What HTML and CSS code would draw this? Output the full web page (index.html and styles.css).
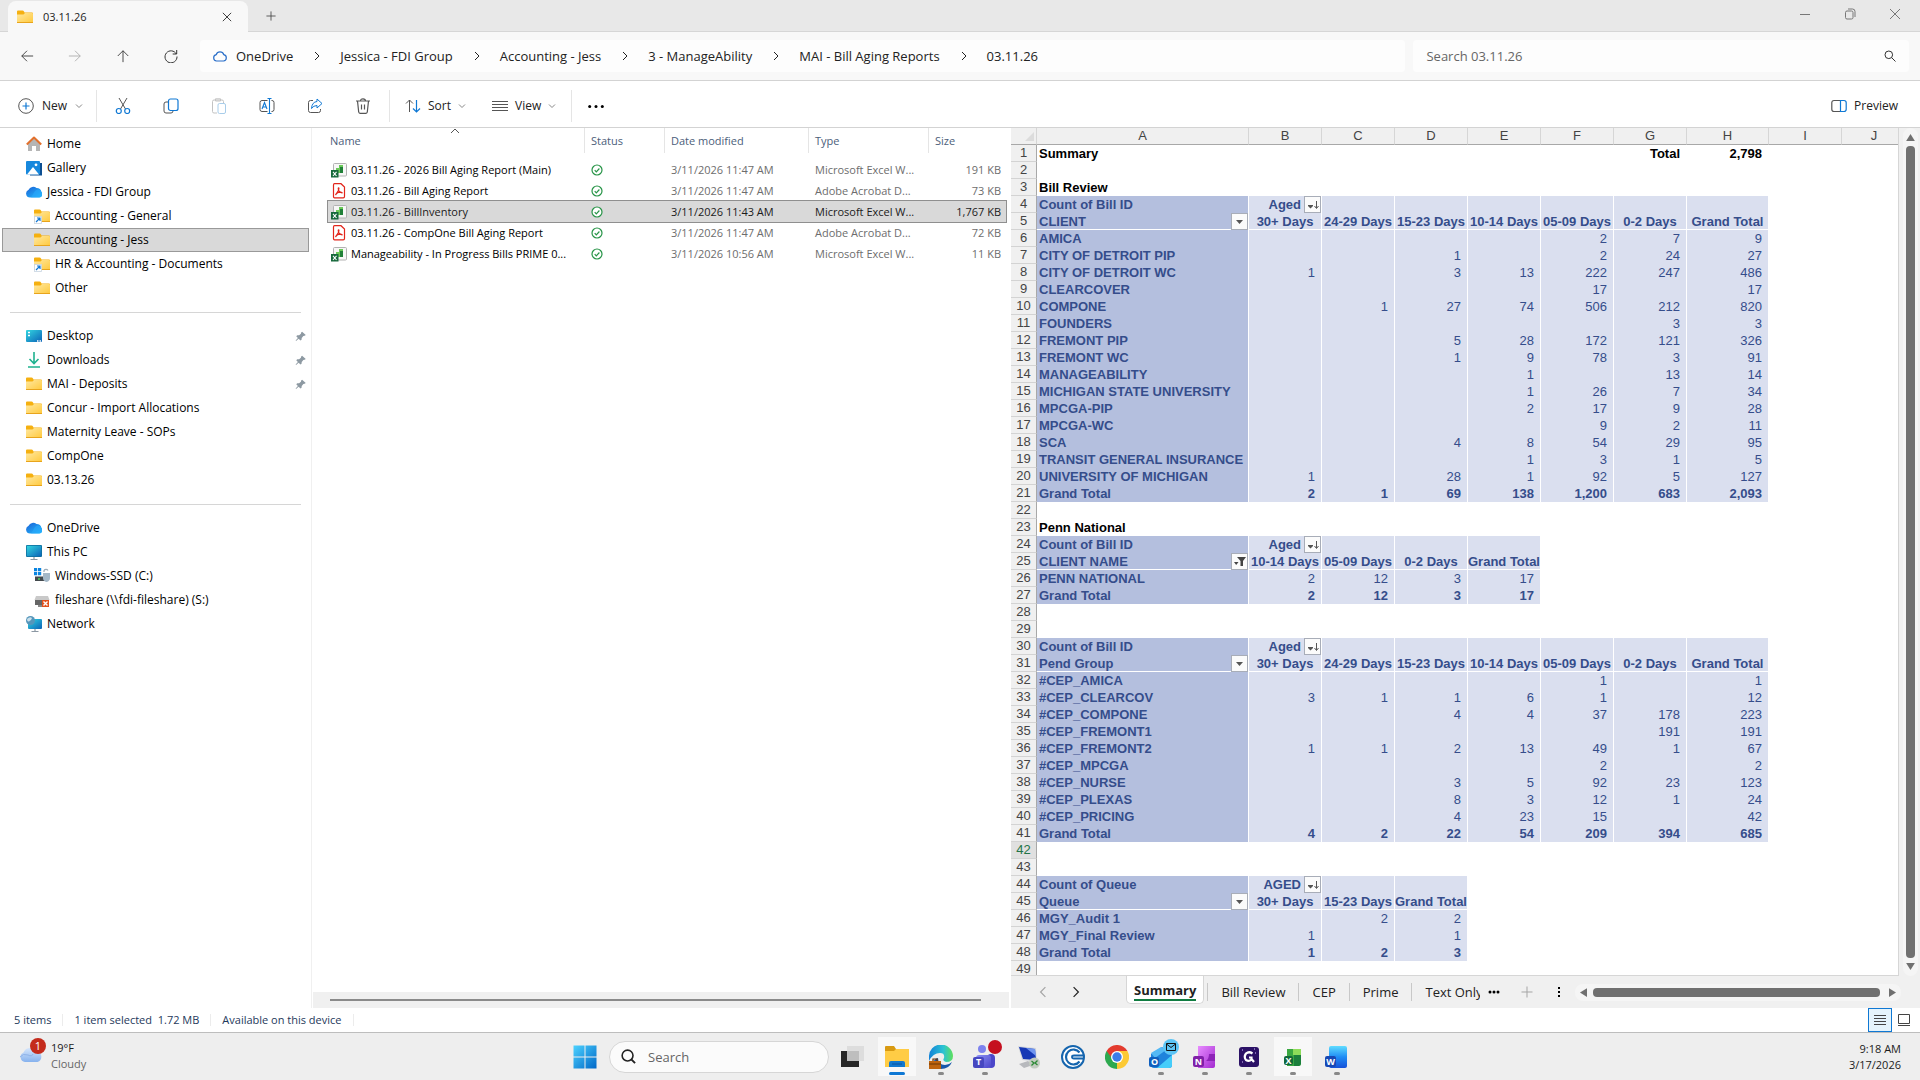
FILE: index.html
```html
<!DOCTYPE html>
<html lang="en">
<head>
<meta charset="utf-8">
<title>03.11.26 - File Explorer</title>
<link rel="stylesheet" href="styles.css">
</head>
<body>
<svg class="defs" aria-hidden="true">
  <defs>
    <linearGradient id="gFolder" x1="0" y1="0" x2="1" y2="1"><stop offset="0" stop-color="#ffe8a0"/><stop offset="1" stop-color="#ffc93c"/></linearGradient>
    <linearGradient id="gScreen" x1="0" y1="0" x2="1" y2="1"><stop offset="0" stop-color="#33d6e0"/><stop offset="1" stop-color="#0b63b8"/></linearGradient>
    <linearGradient id="gCloud" x1="0" y1="0" x2="1" y2="1"><stop offset="0" stop-color="#1b5fd6"/><stop offset="1" stop-color="#23c3ff"/></linearGradient>
    <linearGradient id="gWin" x1="0" y1="0" x2="1" y2="1"><stop offset="0" stop-color="#4cd2ff"/><stop offset="1" stop-color="#0067c7"/></linearGradient>
    <linearGradient id="gEdge" x1="0" y1="0" x2="1" y2="0"><stop offset="0" stop-color="#1382d8"/><stop offset=".6" stop-color="#2cc3d3"/><stop offset="1" stop-color="#5fe05a"/></linearGradient>
    <linearGradient id="gTeams" x1="0" y1="0" x2="1" y2="1"><stop offset="0" stop-color="#8b8ff5"/><stop offset="1" stop-color="#4b46c9"/></linearGradient>
    <linearGradient id="gNote" x1="0" y1="0" x2="1" y2="1"><stop offset="0" stop-color="#e78bff"/><stop offset="1" stop-color="#a32bd0"/></linearGradient>
    <linearGradient id="gWord" x1="0" y1="0" x2="0" y2="1"><stop offset="0" stop-color="#5fdcff"/><stop offset=".5" stop-color="#1f8cf5"/><stop offset="1" stop-color="#1650d8"/></linearGradient>
    <linearGradient id="gWeather" x1="0" y1="0" x2="0" y2="1"><stop offset="0" stop-color="#d6e6fb"/><stop offset="1" stop-color="#86b2ee"/></linearGradient>
  </defs>
  <symbol id="folder" viewBox="0 0 16 16"><path d="M0 2.500Q0 1.500 1 1.500H5.500Q6.500 1.500 7 2.500L7.500 3.500H15Q16 3.500 16 4.500V7H0Z" fill="#f5b010"/><path d="M0 5.500H6.500L8 4H15Q16 4 16 5V13Q16 14 15 14H1Q0 14 0 13Z" fill="url(#gFolder)"/><path d="M0 13.500H16" stroke="#e8a41c"/></symbol>
  <symbol id="folder-link" viewBox="0 0 16 16"><use href="#folder"/><rect x=".5" y="8.500" width="7" height="7" fill="#fff" stroke="#c8d4e0" stroke-width=".8"/><path d="M2 14L6 10M3 10H6V13" fill="none" stroke="#1177d4" stroke-width="1.200"/></symbol>
  <symbol id="home" viewBox="0 0 16 16"><path d="M2 7L8 2L14 7V15H10V10H6V15H2Z" fill="#b5b5b5"/><path d="M.8 8.500L8 1.500L15.200 8.500" fill="none" stroke="#e2702c" stroke-width="2" stroke-linejoin="round"/></symbol>
  <symbol id="gallery" viewBox="0 0 16 16"><path d="M4 3H16V15.500H4Z" fill="#0d4f92"/><rect width="14" height="13.500" rx="1" y="1" fill="#1788dd"/><path d="M1 14.500L7 7L13 14.500Z" fill="#fff"/><circle cx="10" cy="4.800" r="1.400" fill="#fff"/></symbol>
  <symbol id="cloud" viewBox="0 0 16 16"><path d="M4 13.500A4 4 0 0 1 2.600 5.800A5 5 0 0 1 10.500 4A5 5 0 0 1 15.500 8A3.200 3.200 0 0 1 13 13.500Z" fill="url(#gCloud)"/><path d="M5 13.500L9 7Q11 4.500 14 6L15.500 8A3.200 3.200 0 0 1 13 13.500Z" fill="#2aa9fb" opacity=".6"/></symbol>
  <symbol id="desktop" viewBox="0 0 16 16"><rect y="2" width="16" height="12" rx="1" fill="url(#gScreen)"/><path d="M2 4.500H4M2 7.500H4M11 13H12.500M13.500 13H15" stroke="#fff" stroke-width="1.500"/></symbol>
  <symbol id="download" viewBox="0 0 16 16"><path d="M8 0V11M3.500 7L8 11.500L12.500 7M2 15H14" fill="none" stroke="#1fb28f" stroke-width="1.600"/></symbol>
  <symbol id="pc" viewBox="0 0 16 16"><rect y="1" width="16" height="12" rx="1" fill="#0e6f9e"/><rect x=".8" y="1.800" width="14.400" height="10.400" fill="url(#gScreen)"/><path d="M8 13V15M4.500 15.500H11.500" stroke="#8c98a3" stroke-width="1.200"/></symbol>
  <symbol id="ssd" viewBox="0 0 16 16"><path d="M0 0H3.200V3.200H0ZM4 0H7.200V3.200H4ZM0 4H3.200V7.200H0ZM4 4H7.200V7.200H4Z" fill="#0a84e0"/><rect x="1" y="8.500" width="13" height="4.500" fill="#43494d"/><circle cx="5" cy="11" r="1" fill="#4fd35a"/><path d="M10 4V2.500A2.300 2.300 0 0 1 14 2.500" fill="none" stroke="#9aabb8" stroke-width="1.200"/><path d="M9 5H16V10Q16 13 12.500 14Q9 13 9 10Z" fill="#a4b8c8"/></symbol>
  <symbol id="share-drive" viewBox="0 0 16 16"><path d="M2 4H14L15.500 8H.5Z" fill="#c9c9c9"/><rect x="1" y="8" width="13" height="5" fill="#666"/><path d="M4 13H9V15H4Z" fill="#888"/><rect x="8" y="8" width="7" height="7" fill="#e2501c"/><path d="M9.500 9.500L13.500 13.500M13.500 9.500L9.500 13.500" stroke="#fff" stroke-width="1.400"/></symbol>
  <symbol id="network" viewBox="0 0 16 16"><rect x="2" y="3" width="14" height="10" rx="1" fill="url(#gScreen)"/><path d="M9 13V15M5.500 15.500H12.500" stroke="#8c98a3" stroke-width="1.200"/><circle cx="4.500" cy="4.500" r="4.500" fill="#5596bb"/><path d="M1 3Q4 0 6 2Q5 5 3 5.500Q1 6 1 3Z" fill="#c9dfeb"/></symbol>
  <symbol id="pin" viewBox="0 0 16 16"><path d="M10 2L14.500 6L13 7.200L11.500 7.500L9.500 9.800L9.300 12L8 13L5.700 10.800L2.500 13.500L2 13L4.800 9.800L2.800 7.700L4 6.500L6.300 6.500L8.500 4.500L8.800 3Z" fill="#8d99a2"/></symbol>
  <symbol id="xls" viewBox="0 0 16 16"><rect x="2.500" y="1.500" width="13" height="12.500" rx="1" fill="#f7f7f7" stroke="#b2b2b2"/><path d="M5 6H8V11H5ZM8 3H12V11H8Z" fill="#6cc95a"/><path d="M9 5H12V11H9Z" fill="#208038"/><rect y="8" width="7.500" height="7.500" fill="#17693c"/><path d="M2 9.800L5.500 14M5.500 9.800L2 14" stroke="#fff" stroke-width="1.100"/></symbol>
  <symbol id="pdf" viewBox="0 0 16 16"><path d="M3.500.7H10L13.500 4V13.500Q13.500 14.800 12.300 14.800H3.500Q2.500 14.800 2.500 13.500V2Q2.500.7 3.500.7Z" fill="#fff" stroke="#e2251b" stroke-width="1.200"/><path d="M5 11.500C5.500 9.500 8 8 8 5.500C8 4.500 7.200 4.500 7.200 5.500C7.200 8 9.500 10 11 10C12 9 8 8.500 5.500 10.500C4.500 11.300 4.500 12 5 11.500Z" fill="none" stroke="#e2251b" stroke-width="1.100"/></symbol>
  <symbol id="synced" viewBox="0 0 12 12"><circle cx="6" cy="6" r="5" fill="#fff" stroke="#279447" stroke-width="1.200"/><path d="M3.700 6.200L5.300 7.800L8.400 4.500" fill="none" stroke="#279447" stroke-width="1.200"/></symbol>
  <symbol id="chev-r" viewBox="0 0 10 10"><path d="M3 1L7 5L3 9" fill="none" stroke="currentColor"/></symbol>
  <symbol id="chev-d" viewBox="0 0 8 8"><path d="M1 2.500L4 5.500L7 2.500" fill="none" stroke="currentColor"/></symbol>
  <symbol id="close" viewBox="0 0 12 12"><path d="M1 1L11 11M11 1L1 11" fill="none" stroke="currentColor"/></symbol>
  <symbol id="plus" viewBox="0 0 12 12"><path d="M6 .5V11.500M.5 6H11.500" fill="none" stroke="currentColor"/></symbol>
  <symbol id="arrow" viewBox="0 0 16 16"><path d="M8 2L2 8L8 14M2 8H15" fill="none" stroke="currentColor"/></symbol>
  <symbol id="sort-btn" viewBox="0 0 15 15"><path d="M3 8H8V9L5.500 11.500L3 9Z" fill="#555"/><path d="M11.500 4V11M9.500 9L11.500 11.500L13.500 9" fill="none" stroke="#555"/></symbol>
  <symbol id="drop-btn" viewBox="0 0 15 15"><path d="M4 6H11L7.500 10Z" fill="#555"/></symbol>
  <symbol id="filter-btn" viewBox="0 0 15 15"><path d="M2 8H6.500L4.200 11Z" fill="#444"/><path d="M5 3H14L11 7V12H8.500V7Z" fill="#444"/></symbol>
</svg>

<header class="tabstrip">
  <div class="tab"><svg class="i16"><use href="#folder"/></svg><span>03.11.26</span><button aria-label="Close tab"><svg class="i10"><use href="#close"/></svg></button></div>
  <button class="newtab" aria-label="New tab"><svg class="i10"><use href="#plus"/></svg></button>
  <div class="winbtns">
    <button aria-label="Minimize"><svg class="i12" viewBox="0 0 12 12"><path d="M1 6.500H11" stroke="currentColor"/></svg></button>
    <button aria-label="Restore"><svg class="i12" viewBox="0 0 12 12"><rect x="1.500" y="3" width="7.500" height="8" rx="1.500" fill="none" stroke="currentColor"/><path d="M4 1H8.500Q11 1 11 3.500V9" fill="none" stroke="currentColor"/></svg></button>
    <button aria-label="Close"><svg class="i12"><use href="#close"/></svg></button>
  </div>
</header>

<div class="navbar">
  <div class="navbtns">
    <button aria-label="Back"><svg class="i14"><use href="#arrow"/></svg></button>
    <button class="dim" aria-label="Forward"><svg class="i14 flip"><use href="#arrow"/></svg></button>
    <button aria-label="Up"><svg class="i14 up"><use href="#arrow"/></svg></button>
    <button aria-label="Refresh"><svg class="i14" viewBox="0 0 14 14"><path d="M12.300 5A6 6 0 1 0 13 7.500M12.700 1V5H8.700" fill="none" stroke="currentColor"/></svg></button>
  </div>
  <nav class="crumbs" aria-label="Path">
    <svg class="i16" viewBox="0 0 16 16"><path d="M4.500 13A3.200 3.200 0 0 1 4.200 6.700A4 4 0 0 1 11.800 6.700A3.200 3.200 0 0 1 11.500 13Z" fill="none" stroke="#2a6fc9" stroke-width="1.200"/></svg>
    <a href="#">OneDrive</a><svg class="i10"><use href="#chev-r"/></svg>
    <a href="#">Jessica - FDI Group</a><svg class="i10"><use href="#chev-r"/></svg>
    <a href="#">Accounting - Jess</a><svg class="i10"><use href="#chev-r"/></svg>
    <a href="#">3 - ManageAbility</a><svg class="i10"><use href="#chev-r"/></svg>
    <a href="#">MAI - Bill Aging Reports</a><svg class="i10"><use href="#chev-r"/></svg>
    <a href="#">03.11.26</a>
  </nav>
  <div class="search"><input type="text" placeholder="Search 03.11.26" aria-label="Search 03.11.26"><svg class="i12" viewBox="0 0 12 12"><circle cx="4.800" cy="4.800" r="3.800" fill="none" stroke="#333"/><path d="M7.600 7.600L11.500 11.500" stroke="#333"/></svg></div>
</div>

<div class="toolbar">
  <button class="new"><svg class="i16" viewBox="0 0 16 16"><circle cx="8" cy="8" r="7.300" fill="none" stroke="#555"/><path d="M8 4.500V11.500M4.500 8H11.500" stroke="#0f78d4" stroke-width="1.200"/></svg>New<svg class="i8"><use href="#chev-d"/></svg></button>
  <div class="tools">
    <button aria-label="Cut"><svg class="i16" viewBox="0 0 16 16"><path d="M4 0L10.500 11M12 0L5.500 11" fill="none" stroke="#555"/><circle cx="3.800" cy="13" r="2.500" fill="none" stroke="#0f78d4" stroke-width="1.200"/><circle cx="12.200" cy="13" r="2.500" fill="none" stroke="#0f78d4" stroke-width="1.200"/></svg></button>
    <button aria-label="Copy"><svg class="i16" viewBox="0 0 16 16"><path d="M5 4H3Q1 4 1 6V13Q1 15 3 15H8Q10 15 10 13" fill="none" stroke="#555"/><rect x="5.500" y="1" width="9.500" height="11.500" rx="2" fill="#fff" stroke="#0f78d4" stroke-width="1.200"/></svg></button>
    <button aria-label="Paste"><svg class="i16" viewBox="0 0 16 16"><path d="M6 15H3Q1.500 15 1.500 13.500V3.500Q1.500 2 3 2H11Q12.500 2 12.500 3.500V5M4.500.8H9.500V3H4.500Z" fill="none" stroke="#c3c3c3"/><rect x="7" y="5.500" width="7.500" height="10" rx="1.500" fill="#fff" stroke="#a8cdea"/></svg></button>
    <button aria-label="Rename"><svg class="i16" viewBox="0 0 16 16"><path d="M8.500 2.500H3Q1 2.500 1 4.500V11.500Q1 13.500 3 13.500H8.500M12.500 2.500H13Q15 2.500 15 4.500V11.500Q15 13.500 13 13.500H12.500" fill="none" stroke="#555"/><path d="M8.500.5H12.500M8.500 15.500H12.500M10.500.5V15.500M3 11L5.500 4.500L8 11M4 9H7" fill="none" stroke="#0f78d4" stroke-width="1.100"/></svg></button>
    <button aria-label="Share"><svg class="i16" viewBox="0 0 16 16"><path d="M6 2.500H3.500Q1.500 2.500 1.500 4.500V12.500Q1.500 14.500 3.500 14.500H11.500Q13.500 14.500 13.500 12.500V11" fill="none" stroke="#555"/><path d="M10 1L15 5.500L10 10V7.500Q6.500 7.500 4.500 10.500Q5 4 10 3.500Z" fill="none" stroke="#0f78d4" stroke-linejoin="round"/></svg></button>
    <button aria-label="Delete"><svg class="i16" viewBox="0 0 16 16"><path d="M1 3H15M5.500 3Q5.500 .8 8 .8Q10.500 .8 10.500 3M2.500 3L3.700 14Q3.900 15.300 5 15.300H11Q12.100 15.300 12.300 14L13.500 3M6.500 6.500V11.500M9.500 6.500V11.500" fill="none" stroke="#555" stroke-width="1.200"/></svg></button>
  </div>
  <div class="menus">
    <button><svg class="i16" viewBox="0 0 16 16"><path d="M4.500 14V2M1 5.500L4.500 2L8 5.500" fill="none" stroke="#555"/><path d="M11.500 2V14M8 10.500L11.500 14L15 10.500" fill="none" stroke="#0f78d4" stroke-width="1.200"/></svg>Sort<svg class="i8"><use href="#chev-d"/></svg></button>
    <button><svg class="i16" viewBox="0 0 16 16"><path d="M0 3.500H16M0 6.500H16M0 9.500H16M0 12.500H16" stroke="#555"/></svg>View<svg class="i8"><use href="#chev-d"/></svg></button>
  </div>
  <button class="more" aria-label="See more"><svg class="i16" viewBox="0 0 16 16"><circle cx="1.700" cy="8.500" r="1.500"/><circle cx="8" cy="8.500" r="1.500"/><circle cx="14.300" cy="8.500" r="1.500"/></svg></button>
  <button class="preview-btn"><svg class="i16" viewBox="0 0 16 16"><path d="M10 2.500H3Q.8 2.500 .8 4.700V11.300Q.8 13.500 3 13.500H10" fill="none" stroke="#555" stroke-width="1.200"/><path d="M9.500 2.500H13Q15.200 2.500 15.200 4.700V11.300Q15.200 13.500 13 13.500H9.500Z" fill="none" stroke="#0f78d4" stroke-width="1.200"/></svg>Preview</button>
</div>

<main class="main">
  <nav class="side" aria-label="Locations">
    <ul>
      <li><a href="#"><svg class="i16"><use href="#home"/></svg>Home</a></li>
      <li><a href="#"><svg class="i16"><use href="#gallery"/></svg>Gallery</a></li>
      <li><a href="#"><svg class="i16"><use href="#cloud"/></svg>Jessica - FDI Group</a></li>
      <li class="sub"><a href="#"><svg class="i16"><use href="#folder-link"/></svg>Accounting - General</a></li>
      <li class="sub on"><a href="#"><svg class="i16"><use href="#folder"/></svg>Accounting - Jess</a></li>
      <li class="sub"><a href="#"><svg class="i16"><use href="#folder-link"/></svg>HR &amp; Accounting - Documents</a></li>
      <li class="sub"><a href="#"><svg class="i16"><use href="#folder"/></svg>Other</a></li>
    </ul>
    <ul>
      <li><a href="#"><svg class="i16"><use href="#desktop"/></svg>Desktop<svg class="pin"><use href="#pin"/></svg></a></li>
      <li><a href="#"><svg class="i16"><use href="#download"/></svg>Downloads<svg class="pin"><use href="#pin"/></svg></a></li>
      <li><a href="#"><svg class="i16"><use href="#folder"/></svg>MAI - Deposits<svg class="pin"><use href="#pin"/></svg></a></li>
      <li><a href="#"><svg class="i16"><use href="#folder"/></svg>Concur - Import Allocations</a></li>
      <li><a href="#"><svg class="i16"><use href="#folder"/></svg>Maternity Leave - SOPs</a></li>
      <li><a href="#"><svg class="i16"><use href="#folder"/></svg>CompOne</a></li>
      <li><a href="#"><svg class="i16"><use href="#folder"/></svg>03.13.26</a></li>
    </ul>
    <ul>
      <li><a href="#"><svg class="i16"><use href="#cloud"/></svg>OneDrive</a></li>
      <li><a href="#"><svg class="i16"><use href="#pc"/></svg>This PC</a></li>
      <li class="sub"><a href="#"><svg class="i16"><use href="#ssd"/></svg>Windows-SSD (C:)</a></li>
      <li class="sub"><a href="#"><svg class="i16"><use href="#share-drive"/></svg>fileshare (\\fdi-fileshare) (S:)</a></li>
      <li><a href="#"><svg class="i16"><use href="#network"/></svg>Network</a></li>
    </ul>
  </nav>

  <section class="files">
    <table class="filelist">
      <colgroup><col><col class="c-status"><col class="c-date"><col class="c-type"><col class="c-size"></colgroup>
      <thead><tr><th>Name<svg class="caret" viewBox="0 0 10 6"><path d="M1 5L5 1L9 5" fill="none" stroke="#555"/></svg></th><th>Status</th><th>Date modified</th><th>Type</th><th>Size</th></tr></thead>
      <tbody>
        <tr><td><div class="fname"><svg class="i16"><use href="#xls"/></svg><span>03.11.26 - 2026 Bill Aging Report (Main)</span></div></td><td><svg class="i12"><use href="#synced"/></svg></td><td>3/11/2026 11:47 AM</td><td>Microsoft Excel W...</td><td>191 KB</td></tr>
        <tr><td><div class="fname"><svg class="i16"><use href="#pdf"/></svg><span>03.11.26 - Bill Aging Report</span></div></td><td><svg class="i12"><use href="#synced"/></svg></td><td>3/11/2026 11:47 AM</td><td>Adobe Acrobat D...</td><td>73 KB</td></tr>
        <tr class="on"><td><div class="fname"><svg class="i16"><use href="#xls"/></svg><span>03.11.26 - BillInventory</span></div></td><td><svg class="i12"><use href="#synced"/></svg></td><td>3/11/2026 11:43 AM</td><td>Microsoft Excel W...</td><td>1,767 KB</td></tr>
        <tr><td><div class="fname"><svg class="i16"><use href="#pdf"/></svg><span>03.11.26 - CompOne Bill Aging Report</span></div></td><td><svg class="i12"><use href="#synced"/></svg></td><td>3/11/2026 11:47 AM</td><td>Adobe Acrobat D...</td><td>72 KB</td></tr>
        <tr><td><div class="fname"><svg class="i16"><use href="#xls"/></svg><span>Manageability - In Progress Bills PRIME 0...</span></div></td><td><svg class="i12"><use href="#synced"/></svg></td><td>3/11/2026 10:56 AM</td><td>Microsoft Excel W...</td><td>11 KB</td></tr>
      </tbody>
    </table>
    <div class="hscroll"><div></div></div>
  </section>

  <section class="preview">
    <div class="sheetarea">
      <div class="sheetclip">
        <table class="sheet">
          <colgroup><col class="w-row"><col class="w-a"><col class="w"><col class="w"><col class="w"><col class="w"><col class="w"><col class="w"><col class="w-h"><col class="w"><col class="w-j"></colgroup>
          <thead><tr><th><svg class="corner" viewBox="0 0 10 10"><path d="M10 0V10H0Z" fill="#dcdcdc"/></svg><th>A<th>B<th>C<th>D<th>E<th>F<th>G<th>H<th>I<th>J</tr></thead>
          <tbody>
          <tr><th>1<td>Summary<td><td><td><td><td><td>Total<td>2,798</tr>
          <tr><th>2</tr>
          <tr><th>3<td>Bill Review</tr>
          <tr class="p a"><th>4<td>Count of Bill ID<td><button aria-label="Sort"><svg><use href="#sort-btn"/></svg></button>Aged<td><td><td><td><td><td></tr>
          <tr class="p h"><th>5<td><button aria-label="Filter"><svg><use href="#drop-btn"/></svg></button>CLIENT<td>30+ Days<td>24-29 Days<td>15-23 Days<td>10-14 Days<td>05-09 Days<td>0-2 Days<td>Grand Total</tr>
          <tr class="p"><th>6<td>AMICA<td><td><td><td><td>2<td>7<td>9</tr>
          <tr class="p"><th>7<td>CITY OF DETROIT PIP<td><td><td>1<td><td>2<td>24<td>27</tr>
          <tr class="p"><th>8<td>CITY OF DETROIT WC<td>1<td><td>3<td>13<td>222<td>247<td>486</tr>
          <tr class="p"><th>9<td>CLEARCOVER<td><td><td><td><td>17<td><td>17</tr>
          <tr class="p"><th>10<td>COMPONE<td><td>1<td>27<td>74<td>506<td>212<td>820</tr>
          <tr class="p"><th>11<td>FOUNDERS<td><td><td><td><td><td>3<td>3</tr>
          <tr class="p"><th>12<td>FREMONT PIP<td><td><td>5<td>28<td>172<td>121<td>326</tr>
          <tr class="p"><th>13<td>FREMONT WC<td><td><td>1<td>9<td>78<td>3<td>91</tr>
          <tr class="p"><th>14<td>MANAGEABILITY<td><td><td><td>1<td><td>13<td>14</tr>
          <tr class="p"><th>15<td>MICHIGAN STATE UNIVERSITY<td><td><td><td>1<td>26<td>7<td>34</tr>
          <tr class="p"><th>16<td>MPCGA-PIP<td><td><td><td>2<td>17<td>9<td>28</tr>
          <tr class="p"><th>17<td>MPCGA-WC<td><td><td><td><td>9<td>2<td>11</tr>
          <tr class="p"><th>18<td>SCA<td><td><td>4<td>8<td>54<td>29<td>95</tr>
          <tr class="p"><th>19<td>TRANSIT GENERAL INSURANCE<td><td><td><td>1<td>3<td>1<td>5</tr>
          <tr class="p"><th>20<td>UNIVERSITY OF MICHIGAN<td>1<td><td>28<td>1<td>92<td>5<td>127</tr>
          <tr class="p t"><th>21<td>Grand Total<td>2<td>1<td>69<td>138<td>1,200<td>683<td>2,093</tr>
          <tr><th>22</tr>
          <tr><th>23<td>Penn National</tr>
          <tr class="p a"><th>24<td>Count of Bill ID<td><button aria-label="Sort"><svg><use href="#sort-btn"/></svg></button>Aged<td><td><td></tr>
          <tr class="p h"><th>25<td><button aria-label="Filter"><svg><use href="#filter-btn"/></svg></button>CLIENT NAME<td>10-14 Days<td>05-09 Days<td>0-2 Days<td>Grand Total</tr>
          <tr class="p"><th>26<td>PENN NATIONAL<td>2<td>12<td>3<td>17</tr>
          <tr class="p t"><th>27<td>Grand Total<td>2<td>12<td>3<td>17</tr>
          <tr><th>28</tr>
          <tr><th>29</tr>
          <tr class="p a"><th>30<td>Count of Bill ID<td><button aria-label="Sort"><svg><use href="#sort-btn"/></svg></button>Aged<td><td><td><td><td><td></tr>
          <tr class="p h"><th>31<td><button aria-label="Filter"><svg><use href="#drop-btn"/></svg></button>Pend Group<td>30+ Days<td>24-29 Days<td>15-23 Days<td>10-14 Days<td>05-09 Days<td>0-2 Days<td>Grand Total</tr>
          <tr class="p"><th>32<td>#CEP_AMICA<td><td><td><td><td>1<td><td>1</tr>
          <tr class="p"><th>33<td>#CEP_CLEARCOV<td>3<td>1<td>1<td>6<td>1<td><td>12</tr>
          <tr class="p"><th>34<td>#CEP_COMPONE<td><td><td>4<td>4<td>37<td>178<td>223</tr>
          <tr class="p"><th>35<td>#CEP_FREMONT1<td><td><td><td><td><td>191<td>191</tr>
          <tr class="p"><th>36<td>#CEP_FREMONT2<td>1<td>1<td>2<td>13<td>49<td>1<td>67</tr>
          <tr class="p"><th>37<td>#CEP_MPCGA<td><td><td><td><td>2<td><td>2</tr>
          <tr class="p"><th>38<td>#CEP_NURSE<td><td><td>3<td>5<td>92<td>23<td>123</tr>
          <tr class="p"><th>39<td>#CEP_PLEXAS<td><td><td>8<td>3<td>12<td>1<td>24</tr>
          <tr class="p"><th>40<td>#CEP_PRICING<td><td><td>4<td>23<td>15<td><td>42</tr>
          <tr class="p t"><th>41<td>Grand Total<td>4<td>2<td>22<td>54<td>209<td>394<td>685</tr>
          <tr class="cur"><th>42</tr>
          <tr><th>43</tr>
          <tr class="p a"><th>44<td>Count of Queue<td><button aria-label="Sort"><svg><use href="#sort-btn"/></svg></button>AGED<td><td></tr>
          <tr class="p h"><th>45<td><button aria-label="Filter"><svg><use href="#drop-btn"/></svg></button>Queue<td>30+ Days<td>15-23 Days<td>Grand Total</tr>
          <tr class="p"><th>46<td>MGY_Audit 1<td><td>2<td>2</tr>
          <tr class="p"><th>47<td>MGY_Final Review<td>1<td><td>1</tr>
          <tr class="p t"><th>48<td>Grand Total<td>1<td>2<td>3</tr>
          <tr><th>49</tr>
          </tbody>
        </table>
      </div>
      <div class="vscroll"><svg viewBox="0 0 10 8"><path d="M5 0L10 8H0Z"/></svg><div></div><svg viewBox="0 0 10 8"><path d="M5 8L10 0H0Z"/></svg></div>
    </div>
    <div class="sheetbar">
      <button class="dim" aria-label="Previous sheets"><svg class="i12 flip"><use href="#chev-r"/></svg></button>
      <button aria-label="Next sheets"><svg class="i12"><use href="#chev-r"/></svg></button>
      <div class="sheettabs">
        <button class="on"><span>Summary</span></button>
        <button>Bill Review</button>
        <button>CEP</button>
        <button>Prime</button>
        <button class="cut">Text Only</button>
      </div>
      <button class="dots" aria-label="More sheets"><svg viewBox="0 0 12 4"><circle cx="2" cy="2" r="1.500"/><circle cx="6" cy="2" r="1.500"/><circle cx="10" cy="2" r="1.500"/></svg></button>
      <button class="add dim" aria-label="New sheet"><svg class="i12"><use href="#plus"/></svg></button>
      <button class="grip" aria-label="Resize tabs"><svg viewBox="0 0 2 10"><path d="M0 0H2V2H0ZM0 4H2V6H0ZM0 8H2V10H0Z"/></svg></button>
      <div class="sheetscroll"><svg viewBox="0 0 8 10"><path d="M0 5L8 0V10Z"/></svg><div></div><svg viewBox="0 0 8 10"><path d="M8 5L0 0V10Z"/></svg></div>
    </div>
  </section>
</main>

<footer class="status">
  <span>5 items</span><span>1 item selected&nbsp; 1.72 MB</span><span>Available on this device</span>
  <div class="views">
    <button class="on" aria-label="Details view"><svg viewBox="0 0 12 12"><path d="M0 1.500H12M0 4.500H12M0 7.500H12M0 10.500H12" stroke="#444"/></svg></button>
    <button aria-label="Large icons view"><svg viewBox="0 0 12 12"><path d="M.5.5H11.500V9.500H.5ZM0 11.500H12" fill="none" stroke="#444"/></svg></button>
  </div>
</footer>

<div class="taskbar">
  <button class="weather">
    <span class="wicon"><svg viewBox="0 0 24 18"><path d="M6 17A5 5 0 0 1 4.500 7.500A8 8 0 0 1 18.500 6.500A5.500 5.500 0 0 1 18.500 17Z" fill="url(#gWeather)"/><path d="M1 12Q4 8 9 10Q13 12 14 9" fill="none" stroke="#8fb3e8"/></svg><b>1</b></span>
    <span>19°F<small>Cloudy</small></span>
  </button>
  <div class="apps">
    <button aria-label="Start"><svg viewBox="0 0 24 24"><path d="M.5.5H11.500V11.500H.5ZM12.500.5H23.500V11.500H12.500ZM.5 12.500H11.500V23.500H.5ZM12.500 12.500H23.500V23.500H12.500Z" fill="url(#gWin)"/></svg></button>
    <label class="tsearch"><svg viewBox="0 0 16 16"><circle cx="7" cy="7" r="5.800" fill="none" stroke="#222" stroke-width="1.700"/><path d="M11 11L15 15" stroke="#222" stroke-width="2"/></svg><input type="text" placeholder="Search" aria-label="Search"></label>
    <button aria-label="Task view"><svg viewBox="0 0 24 24"><rect y="6" width="18" height="16" fill="#262626"/><rect x="6" y="1" width="17" height="15" fill="#d9d9d9" opacity=".85"/></svg></button>
    <button class="live now" aria-label="File Explorer"><svg viewBox="0 0 24 24"><path d="M0 2Q0 1 1 1H9L11 4H24V10H0Z" fill="#d89a12"/><path d="M0 6H9L11 4H24V22H0Z" fill="#ffcc45"/><path d="M4 22V18Q4 16 6 16H18Q20 16 20 18V22Z" fill="#1279cf"/><path d="M7 19H17" stroke="#0a539c"/></svg></button>
    <button class="live" aria-label="Edge"><svg viewBox="0 0 24 24"><path d="M0 12A12 12 0 0 1 24 11Q24 17 17 17Q13 16 15 13Q16 8 11 8Q4 8 0 16Z" fill="url(#gEdge)"/><path d="M9 13Q9 20 16 20Q20 20 23 17Q20 24 12 24Q6 24 4 19Q5 13 9 13Z" fill="#1757ab"/><rect y="16" width="12" height="8" fill="#bd6410"/><path d="M4 16V14H8V16M0 19H12" fill="none" stroke="#6b3606" stroke-width="1.200"/></svg></button>
    <button class="live" aria-label="Teams"><svg viewBox="0 0 24 24"><circle cx="9" cy="4" r="4" fill="#7d82ee"/><rect x="14" y="9" width="8" height="14" rx="4" fill="#4b46c9"/><rect x="3" y="10" width="15" height="13" rx="3" fill="url(#gTeams)"/><rect y="12" width="11" height="11" rx="2" fill="#4647c0"/></svg><b class="letter">T</b><i class="reddot"></i></button>
    <button aria-label="Remote Desktop"><svg viewBox="0 0 24 24"><path d="M1 1L19 3L20 17L5 15Z" fill="#d5d8dd"/><path d="M2 2L18 4L19 15L6 14Z" fill="#1638b5"/><path d="M9 3L18 4L19 11Z" fill="#6f95f0"/><path d="M2 19L11 16L16 20L7 23Z" fill="#b7b9bd"/><circle cx="17.500" cy="18" r="5.500" fill="#c2cbc0"/><path d="M14.500 16L17 18L14.500 20.500M20.500 15.500L18 18L20.500 20" fill="none" stroke="#2c8a35" stroke-width="1.300"/></svg></button>
    <button aria-label="CCH"><svg viewBox="0 0 24 24"><circle cx="12" cy="12" r="11" fill="#fff" stroke="#1565ae" stroke-width="2"/><path d="M18.500 7.500A7.500 7.500 0 1 0 18.500 16.500" fill="none" stroke="#1565ae" stroke-width="2.200"/><path d="M23 10.500H13Q11 10.500 11 12T13 13.500H23" fill="none" stroke="#1565ae" stroke-width="1.800"/></svg></button>
    <button aria-label="Chrome"><svg viewBox="0 0 24 24"><path d="M12 12L1.600 6A12 12 0 0 1 22.400 6Z" fill="#e33b2e"/><path d="M12 12L22.400 6A12 12 0 0 1 12 24Z" fill="#fcc934"/><path d="M12 12V24A12 12 0 0 1 1.600 6Z" fill="#2da94f"/><path d="M12 6H22.400L17.500 14Z" fill="#fcc934"/><path d="M1.600 6L6.800 15L12 18V6Z" fill="#2da94f"/><path d="M1.600 6H12V7L7 9L6 12Z" fill="#e33b2e"/><circle cx="12" cy="12" r="6" fill="#fff"/><circle cx="12" cy="12" r="4.700" fill="#3b7de8"/></svg></button>
    <button class="live" aria-label="Outlook"><svg viewBox="0 0 24 24"><path d="M2 9L13 2L23 9V20Q23 23 20 23H5Q2 23 2 20Z" fill="#1f83dc"/><path d="M2 8L12 2L17 5L6 13Z" fill="#54b9f5"/><path d="M23 10V20Q23 23 20 23H8Z" fill="#45cdfa"/><rect y="12" width="10" height="10" rx="2" fill="#0f5fbe"/></svg><b class="letter">O</b><i class="mail"><svg viewBox="0 0 10 8"><path d="M.5.5H9.500V7.500H.5ZM.5 1L5 4.500L9.500 1" fill="none" stroke="#111"/></svg></i></button>
    <button class="live" aria-label="OneNote"><svg viewBox="0 0 24 24"><path d="M5 1H22V21Q22 23 20 23H5Z" fill="url(#gNote)"/><path d="M16 9H22V16H13Q16 14 16 9Z" fill="#8e24b8"/><rect y="11" width="11" height="11" rx="2" fill="#8020a8"/></svg><b class="letter">N</b></button>
    <button class="live" aria-label="G app"><svg viewBox="0 0 24 24"><rect x="2" y="2" width="20" height="20" rx="3" fill="#2b1166"/><path d="M15.500 8.500Q12 6 9 8.500Q6.500 12 9 15Q12 17 14.500 14.500V12.500H12M14.500 14L17 17" fill="none" stroke="#fff" stroke-width="2.200"/><path d="M5 5H6M17 4H18M18 8H19M5 17H6" stroke="#d9c8ff"/></svg></button>
    <button class="live box" aria-label="Excel"><svg viewBox="0 0 24 24"><path d="M6 4H20V19Q20 21 18 21H6Z" fill="#3aa842"/><path d="M12 4H20V10H12Z" fill="#8edc5a"/><path d="M13 10H20V19L18 21H13Z" fill="#1c7f3c"/><rect x="3" y="11" width="9" height="9" rx="2" fill="#12683a"/></svg><b class="letter in">X</b></button>
    <button class="live" aria-label="Word"><svg viewBox="0 0 24 24"><rect x="4" y="1" width="18" height="22" rx="2" fill="url(#gWord)"/><rect y="11" width="11" height="11" rx="2" fill="#1748b4"/></svg><b class="letter">W</b></button>
  </div>
  <button class="clock">9:18 AM<br>3/17/2026</button>
</div>
</body>
</html>
```
FILE: styles.css
```css
* { box-sizing: border-box; }
body { margin: 0; height: 100vh; min-height: 600px; display: flex; flex-direction: column; overflow: hidden; background: #fff; color: #1b1b1b; font-family: "Open Sans", "Noto Sans", sans-serif; font-size: 11px; line-height: 16px; }
button { border: 0; background: none; padding: 0; margin: 0; font: inherit; color: inherit; }
a { color: inherit; text-decoration: none; }
input { border: 0; background: none; font: inherit; color: inherit; outline: 0; min-width: 0; }
table { border-collapse: separate; border-spacing: 0; table-layout: fixed; }
ul { list-style: none; margin: 0; padding: 0; }
svg { display: block; flex: none; }
.defs { position: absolute; width: 0; height: 0; }
.i8 { width: 8px; height: 8px; }
.i10 { width: 10px; height: 10px; }
.i12 { width: 12px; height: 12px; }
.i14 { width: 14px; height: 14px; }
.i16 { width: 16px; height: 16px; }
.flip { transform: scaleX(-1); }
.up { transform: rotate(90deg); }
.dim { color: #a5a5a5; }

/* Tab strip */
.tabstrip { display: flex; flex: none; height: 32px; padding-left: 8px; background: #e8e8e8; border-bottom: 1px solid #d6d6d6; }
.tab { display: flex; align-items: center; gap: 10px; width: 240px; height: 32px; margin-top: 1px; padding: 0 16px 0 9px; background: #f8f8f8; border-radius: 8px 8px 0 0; }
.tab span { flex: 1; color: #222; }
.newtab { width: 45px; display: grid; place-items: center; color: #444; }
.winbtns { margin-left: auto; padding-right: 3px; display: flex; color: #777; }
.winbtns button { width: 45px; display: grid; place-items: center; padding-bottom: 4px; }

/* Address row */
.navbar { display: flex; flex: none; align-items: center; gap: 8px; height: 49px; padding: 0 11px 0 3px; background: #f8f8f8; border-bottom: 1px solid #d3d3d3; font-size: 13px; }
.navbtns { display: flex; width: 189px; }
.navbtns button { width: 48px; height: 32px; display: grid; place-items: center; flex: none; color: #333; }
.navbtns .dim { color: #aaa; }
.crumbs { flex: 1; display: flex; align-items: center; height: 32px; padding-left: 12px; background: #fdfdfd; border-radius: 4px; color: #222; }
.crumbs a { margin-left: 18px; white-space: nowrap; }
.crumbs a:first-of-type { margin-left: 8px; }
.crumbs .i10 { margin-left: 19px; }
.search { flex: 0 0 26%; display: flex; align-items: center; height: 32px; padding: 0 13px; background: #fdfdfd; border-radius: 4px; }
.search input { flex: 1; padding: 0; }
input::placeholder { color: #666; opacity: 1; }

/* Command bar */
.toolbar { display: flex; flex: none; align-items: center; height: 47px; padding: 3px 22px 0 0; border-bottom: 1px solid #d3d3d3; font-size: 12px; color: #222; }
.toolbar button { display: flex; align-items: center; height: 32px; }
.toolbar .i8 { color: #888; }
.toolbar .new { width: 97px; gap: 8px; padding-left: 18px; border-right: 1px solid #e5e5e5; }
.tools { display: flex; padding: 0 2px; border-right: 1px solid #e5e5e5; }
.tools button { width: 48px; justify-content: center; }
.menus { display: flex; gap: 26px; padding: 0 15px; border-right: 1px solid #e5e5e5; }
.menus button, .preview-btn { gap: 7px; }
.toolbar .more { padding-left: 16px; }
.preview-btn { margin-left: auto; }

/* Three panes */
.main { flex: 1; min-height: 0; display: grid; grid-template-columns: 312px minmax(0, 233fr) minmax(0, 303fr); grid-template-rows: minmax(0, 1fr); }
.side { padding: 4px 2px; border-right: 1px solid #f0f0f0; color: #000; font-size: 12px; }
.side ul + ul::before { content: ""; display: block; height: 1px; margin: 12px 8px 11px; background: #d6d6d6; }
.side a { display: flex; align-items: center; gap: 5px; height: 24px; padding: 0 2px 0 24px; white-space: nowrap; }
.side .sub a { padding-left: 32px; }
.side .on a { background: #d9d9d9; border: 1px solid #999; }
.side .on.sub a { padding-left: 31px; }
.pin { width: 13px; height: 13px; margin-left: auto; }

.files { display: flex; flex-direction: column; min-width: 0; padding-left: 1px; }
.filelist { width: calc(100% - 20px); margin-left: 15px; }
.c-status { width: 80px; }
.c-date { width: 144px; }
.c-type { width: 120px; }
.c-size { width: 77px; }
.filelist th { position: relative; height: 31px; padding: 0 0 0 6px; text-align: left; vertical-align: top; line-height: 26px; font-weight: 400; color: #4c607a; background: linear-gradient(#e5e5e5, #e5e5e5) right top / 1px 25px no-repeat; }
.filelist th:first-child { padding-left: 2px; }
.filelist th:last-child { background: none; }
.caret { position: absolute; left: 50%; top: 0; width: 10px; height: 6px; margin-left: -7px; }
.filelist td { height: 21px; padding: 0 0 0 6px; white-space: nowrap; color: #6d6d6d; overflow: hidden; }
.filelist td:first-child { padding-left: 3px; color: #000; }
.filelist td:last-child { text-align: right; padding-right: 5px; }
.filelist .on { background: #d9d9d9; outline: 1px solid #8f8f8f; }
.filelist .on td { color: #1b1b1b; }
.fname { display: flex; align-items: center; gap: 4px; }
.hscroll { margin-top: auto; height: 16px; margin-right: 2px; padding: 7px 28px 7px 17px; background: #f0f0f0; }
.hscroll div { height: 2px; background: #8a8a8a; }

/* Workbook preview */
.preview { display: flex; flex-direction: column; min-width: 0; background: #f0f0f0; font-family: "Liberation Sans", Arial, sans-serif; font-size: 13px; }
.sheetarea { flex: 1; min-height: 0; display: flex; }
.sheetclip { flex: 1; min-width: 0; overflow: hidden; background: #fff; border-right: 1px solid #d6d6d6; border-bottom: 1px solid #d6d6d6; }
.sheet { width: 896px; line-height: 17px; color: #000; }
.w-row { width: 26px; }
.w-a { width: 212px; }
.w { width: 73px; }
.w-h { width: 82px; }
.w-j { width: 65px; }
.sheet th, .sheet td { padding: 0; height: 17px; white-space: nowrap; font-weight: 400; }
.sheet th { color: #444; background: #f0f0f0; }
.sheet thead th { line-height: 16px; border-bottom: 1px solid #a8a8a8; border-right: 1px solid #d6d6d6; }
.sheet tbody th { line-height: 16px; border-bottom: 1px solid #d3d3d3; border-right: 1px solid #a8a8a8; }
.sheet .cur th { background: #e0e0e0; color: #227447; }
.corner { width: 9px; height: 9px; margin-left: 14px; }
.sheet td { text-align: right; padding-right: 6px; font-weight: 700; border-right: 1px solid transparent; }
.sheet td:nth-child(2) { text-align: left; padding: 0 0 0 2px; }
.p td { background: #dadfef; color: #354d8b; border-right-color: #fff; }
.sheet .p td { font-weight: 400; }
.p td:nth-child(2) { background: #b4bfde; }
.sheet .p td:nth-child(2), .sheet .a td, .sheet .h td, .sheet .t td { font-weight: 700; }
.sheet .a td { padding-right: 0; }
.sheet .h td { text-align: center; padding-right: 0; box-shadow: inset 0 -1px #fff; }
.sheet .h td:nth-child(2) { text-align: left; }
.sheet button { float: right; width: 17px; height: 17px; margin-left: 3px; background: #fbfbfb; border: 1px solid #a8adb8; }
.sheet button svg { width: 15px; height: 15px; }
.vscroll { width: 15px; margin: 0 2px 0 4px; padding: 6px 3px; display: flex; flex-direction: column; align-items: center; gap: 5px; background: #f5f5f5; border-radius: 8px; fill: #707070; }
.vscroll div { flex: 1; width: 9px; border-radius: 4px; background: #707070; }
.vscroll svg { width: 9px; height: 7px; }

.sheetbar { display: flex; flex: none; align-items: center; height: 32px; padding: 0 19px 0 15px; font-family: "Open Sans", "Noto Sans", sans-serif; font-size: 13px; color: #222; }
.sheetbar > button { width: 33px; height: 28px; display: grid; place-items: center; flex: none; }
.sheettabs { display: flex; align-items: center; height: 32px; margin-left: 34px; }
.sheettabs button { height: 18px; padding: 0 13px; border-right: 1px solid #c8c8c8; white-space: nowrap; }
.sheettabs .on { align-self: flex-start; height: 28px; padding: 0 7px; margin-right: 3px; background: #fff; border: 1px solid #d6d6d6; border-top: 0; border-radius: 0 0 5px 5px; font-weight: 700; }
.sheettabs .on + button { border-left: 1px solid #c8c8c8; }
.sheettabs .on span { display: block; padding-top: 3px; border-bottom: 2px solid #107c41; line-height: 18px; }
.sheettabs .cut { width: 68px; padding-right: 0; border: 0; overflow: hidden; text-align: left; }
.sheetbar > .dots { width: 28px; }
.dots svg { width: 12px; height: 4px; }
.sheetbar > .add { width: 38px; }
.sheetbar > .grip { width: 26px; }
.grip svg { width: 2px; height: 10px; }
.sheetscroll { flex: 1; display: flex; align-items: center; gap: 6px; height: 17px; margin-left: 3px; padding: 0 5px; background: #f5f5f5; border-radius: 8px; fill: #707070; }
.sheetscroll div { flex: 1; height: 9px; margin-right: 3px; border-radius: 4px; background: #707070; }
.sheetscroll svg { width: 7px; height: 9px; }

/* Status bar */
.status { display: flex; flex: none; align-items: center; height: 24px; padding: 0 4px 0 3px; color: #1e395b; }
.status span { padding: 0 11px; line-height: 12px; border-right: 1px solid #ececec; }
.views { margin-left: auto; display: flex; }
.views button { width: 24px; height: 24px; display: grid; place-items: center; }
.views .on { background: #e5f3fb; border: 1px solid #0f78d4; }
.views svg { width: 12px; height: 12px; }

/* Taskbar */
.taskbar { display: grid; flex: none; grid-template-columns: 1fr auto 1fr; height: 48px; background: #eee; border-top: 1px solid #bdbdbd; }
.weather { justify-self: start; display: flex; gap: 8px; padding: 7px 0 0 19px; text-align: left; }
.weather small { display: block; font-size: 11px; color: #666; }
.weather svg { width: 24px; height: 18px; margin-top: 5px; }
.wicon { position: relative; }
.wicon b { position: absolute; left: 11px; top: -2px; width: 16px; height: 16px; border-radius: 50%; background: #c42b1c; color: #fff; text-align: center; font-weight: 400; }
.apps { display: flex; align-items: center; padding-left: 2px; }
.apps > button { position: relative; width: 44px; height: 47px; display: grid; place-items: center; }
.apps > button > svg { width: 24px; height: 24px; }
.tsearch { display: flex; align-items: center; gap: 10px; width: 220px; height: 32px; margin: 0 2px; padding: 0 11px; background: #fbfbfb; border: 1px solid #d6d6d6; border-radius: 16px; font-size: 13px; }
.tsearch svg { width: 15px; height: 15px; }
.tsearch input { flex: 1; }
.apps .now, .apps .box { background: linear-gradient(#f8f8f8, #f8f8f8) center / 38px 39px no-repeat; }
.live::after { content: ""; position: absolute; left: 19px; bottom: 5px; width: 6px; height: 3px; border-radius: 2px; background: #888; }
.now::after { left: 14px; width: 16px; background: #0f78d4; }
.letter { position: absolute; left: 10px; top: 23px; width: 11px; text-align: center; color: #fff; font-size: 9px; line-height: 11px; }
.letter.in { left: 12px; top: 22px; }
.reddot { position: absolute; right: 5px; top: 7px; width: 14px; height: 14px; border-radius: 50%; background: #c50f1f; }
.mail { position: absolute; right: 4px; top: 6px; width: 16px; height: 16px; border-radius: 50%; background: #5cc5f5; display: grid; place-items: center; }
.mail svg { width: 10px; height: 8px; }
.clock { justify-self: end; padding-right: 19px; text-align: right; }
```
